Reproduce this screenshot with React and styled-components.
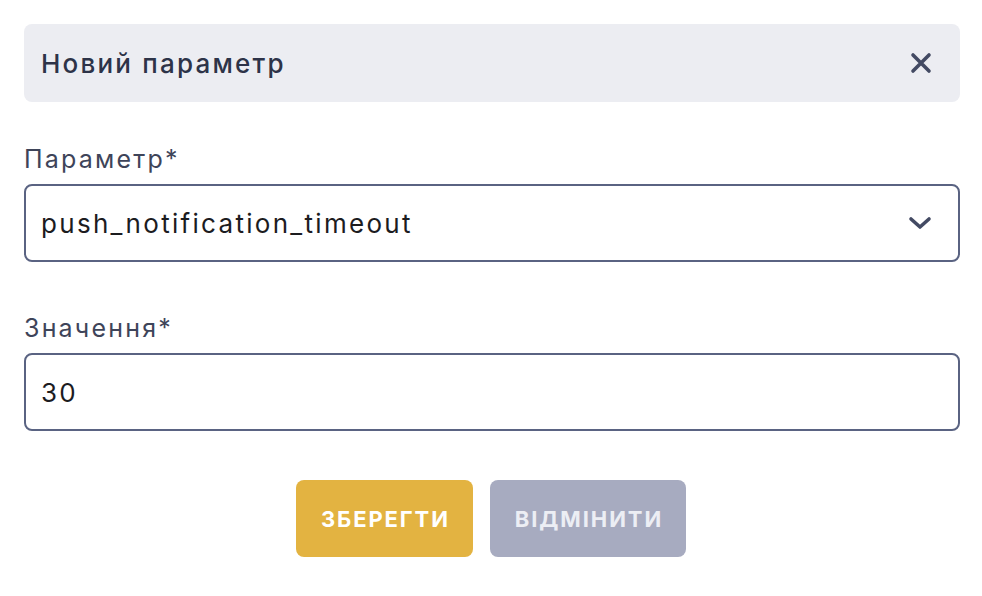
import React, { useState } from "react";
import styled, { createGlobalStyle } from "styled-components";

const GlobalStyle = createGlobalStyle`
  body {
    margin: 0;
    background: #ffffff;
    font-family: "Inter", "Noto Sans", sans-serif;
  }
`;

const Page = styled.div`
  padding: 24px 22px 24px 24px;
  width: 936px;
`;

const Header = styled.div`
  height: 78px;
  display: flex;
  align-items: center;
  justify-content: space-between;
  padding: 0 28px 0 17px;
  background: #ecedf2;
  border-radius: 8px;
  margin-bottom: 41px;
`;

const Title = styled.h2`
  margin: 0;
  font-size: 26px;
  font-weight: 500;
  letter-spacing: 2.2px;
  color: #2d3348;
`;

const CloseButton = styled.button`
  border: none;
  background: none;
  padding: 0;
  display: flex;
  cursor: pointer;
`;

const Field = styled.div`
  display: flex;
  flex-direction: column;
  margin-bottom: ${(p) => p.$gap}px;
`;

const Label = styled.label`
  font-size: 25px;
  line-height: 32px;
  letter-spacing: 2.2px;
  color: #3e4459;
  margin-bottom: 9px;
`;

const Box = styled.div`
  position: relative;
  height: 78px;
  box-sizing: border-box;
  border: 2px solid #5a6382;
  border-radius: 8px;
  display: flex;
  align-items: center;
`;

const Select = styled.select`
  appearance: none;
  border: none;
  background: transparent;
  width: 100%;
  height: 100%;
  padding: 0 60px 0 15px;
  font-family: inherit;
  font-size: 26px;
  letter-spacing: 2.3px;
  color: #1c1c1f;
  outline: none;
`;

const Input = styled.input`
  border: none;
  background: transparent;
  width: 100%;
  height: 100%;
  padding: 0 15px;
  box-sizing: border-box;
  font-family: inherit;
  font-size: 26px;
  letter-spacing: 2.3px;
  color: #1c1c1f;
  outline: none;
`;

const Chevron = styled.span`
  position: absolute;
  right: 26px;
  top: 50%;
  transform: translateY(-50%);
  display: flex;
  pointer-events: none;
`;

const Actions = styled.div`
  display: flex;
  justify-content: center;
  gap: 17px;
  padding-right: 2px;
`;

const Button = styled.button`
  height: 77px;
  padding: 0 23px 0 25px;
  border: none;
  border-radius: 8px;
  background: ${(p) => (p.$primary ? "#e3b341" : "#a7abc0")};
  color: ${(p) => (p.$primary ? "#ffffff" : "#eceef4")};
  font-family: inherit;
  font-size: 22px;
  font-weight: 700;
  letter-spacing: 1.9px;
  cursor: pointer;
`;

const App = () => {
  const [param, setParam] = useState("push_notification_timeout");
  const [value, setValue] = useState("30");

  return (
    <Page>
      <GlobalStyle />
      <Header>
        <Title>Новий параметр</Title>
        <CloseButton aria-label="close">
          <svg width="22" height="22" viewBox="0 0 22 22">
            <path d="M3 3 L19 19 M19 3 L3 19" stroke="#434a63" strokeWidth="3.6" strokeLinecap="round" />
          </svg>
        </CloseButton>
      </Header>

      <Field $gap={50}>
        <Label>Параметр*</Label>
        <Box>
          <Select value={param} onChange={(e) => setParam(e.target.value)}>
            <option>push_notification_timeout</option>
          </Select>
          <Chevron>
            <svg width="24" height="16" viewBox="0 0 24 16">
              <path d="M3 4 L12 12 L21 4" fill="none" stroke="#434a63" strokeWidth="3.6" strokeLinecap="round" strokeLinejoin="round" />
            </svg>
          </Chevron>
        </Box>
      </Field>

      <Field $gap={49}>
        <Label>Значення*</Label>
        <Box>
          <Input value={value} onChange={(e) => setValue(e.target.value)} />
        </Box>
      </Field>

      <Actions>
        <Button $primary>ЗБЕРЕГТИ</Button>
        <Button>ВІДМІНИТИ</Button>
      </Actions>
    </Page>
  );
};

export default App;
